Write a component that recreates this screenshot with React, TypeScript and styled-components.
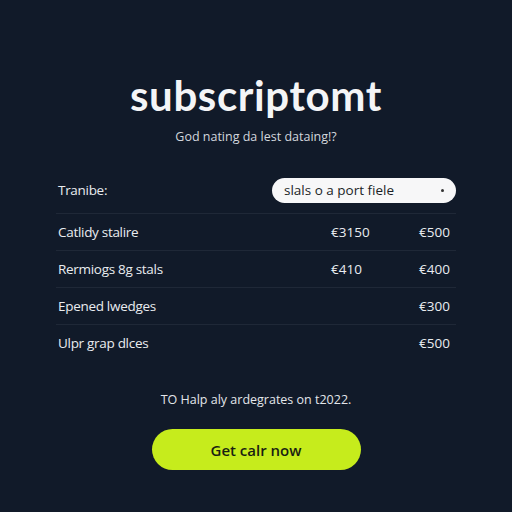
import React from "react";
import styled, { createGlobalStyle } from "styled-components";

const Global = createGlobalStyle`
  html, body { margin: 0; padding: 0; background: #111a29; }
  body { font-family: "Open Sans", "Liberation Sans", sans-serif; }
`;

const Page = styled.div`
  width: 512px;
  height: 512px;
  background: #111a29;
  display: flex;
  flex-direction: column;
  align-items: center;
  box-sizing: border-box;
  padding-top: 71px;
`;

const Title = styled.h1`
  margin: 0;
  font-family: "Lato", sans-serif;
  font-weight: 700;
  font-size: 42px;
  line-height: 48px;
  color: #f4f5f7;
  letter-spacing: 0.6px;
`;

const Subtitle = styled.p`
  margin: 10px 0 0;
  font-size: 12.5px;
  line-height: 16px;
  color: #d3d7dd;
`;

const Table = styled.div`
  width: 400px;
  margin-top: 22px;
  display: flex;
  flex-direction: column;
`;

const Row = styled.div<{ $last?: boolean }>`
  display: grid;
  grid-template-columns: 1fr 88px 37px;
  align-items: center;
  height: 36px;
  border-bottom: ${(p) => (p.$last ? "none" : "1px solid #1f2837")};
  color: #e9ecf0;
  font-size: 13.5px;
`;

const HeadRow = styled.div`
  display: flex;
  align-items: center;
  justify-content: space-between;
  height: 46px;
  border-bottom: 1px solid #1f2837;
  color: #e9ecf0;
  font-size: 13.5px;
`;

const Label = styled.span`
  padding-left: 2px;
  letter-spacing: -0.3px;
`;

const Price = styled.span`
  text-align: left;
`;

const Select = styled.div`
  width: 184px;
  height: 25px;
  border-radius: 13px;
  background: #f7f7f8;
  color: #1b1f27;
  font-size: 13.5px;
  display: flex;
  align-items: center;
  justify-content: space-between;
  padding: 0 12px 0 12px;
  box-sizing: border-box;
`;

const Dot = styled.span`
  width: 3px;
  height: 3px;
  border-radius: 50%;
  background: #333;
`;

const Note = styled.p`
  margin: 31px 0 0;
  font-size: 12.5px;
  line-height: 16px;
  color: #e3e6ea;
`;

const Button = styled.button`
  margin-top: 21px;
  width: 209px;
  height: 41px;
  border: none;
  border-radius: 21px;
  background: #c6ec1c;
  color: #1a1f12;
  font-family: "Open Sans", sans-serif;
  font-size: 15px;
  font-weight: 600;
  cursor: pointer;
`;

const rows = [
  { label: "Catlidy stalire", a: "€3150", b: "€500" },
  { label: "Rermiogs 8g stals", a: "€410", b: "€400" },
  { label: "Epened lwedges", a: "", b: "€300" },
  { label: "Ulpr grap dlces", a: "", b: "€500" },
];

export default function App() {
  return (
    <>
      <Global />
      <Page>
        <Title>subscriptomt</Title>
        <Subtitle>God nating da lest dataing!?</Subtitle>
        <Table>
          <HeadRow>
            <Label>Tranibe:</Label>
            <Select>
              <span>slals o a port fiele</span>
              <Dot />
            </Select>
          </HeadRow>
          {rows.map((r, i) => (
            <Row key={r.label} $last={i === rows.length - 1}>
              <Label>{r.label}</Label>
              <Price>{r.a}</Price>
              <Price>{r.b}</Price>
            </Row>
          ))}
        </Table>
        <Note>TO Halp aly ardegrates on t2022.</Note>
        <Button>Get calr now</Button>
      </Page>
    </>
  );
}
